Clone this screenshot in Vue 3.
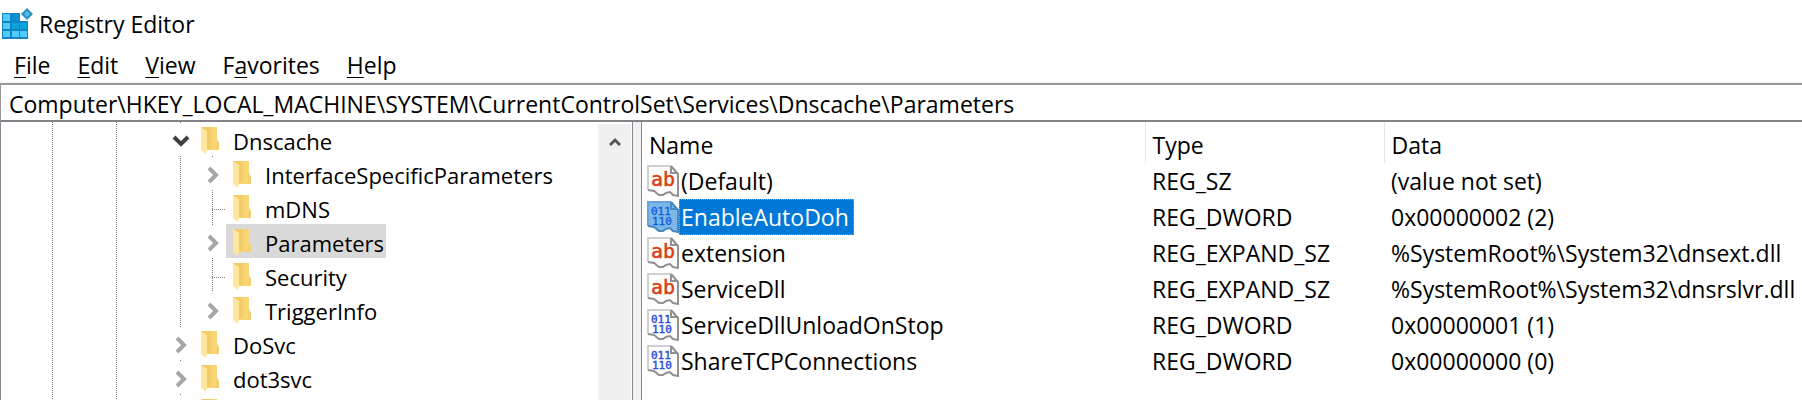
<script setup>
import { ref } from 'vue'

const menus = [
  { before: '', key: 'F', after: 'ile' },
  { before: '', key: 'E', after: 'dit' },
  { before: '', key: 'V', after: 'iew' },
  { before: 'F', key: 'a', after: 'vorites' },
  { before: '', key: 'H', after: 'elp' }
]

const address = ref('Computer\\HKEY_LOCAL_MACHINE\\SYSTEM\\CurrentControlSet\\Services\\Dnscache\\Parameters')

// toggle: 'open' | 'closed' | 'none'
const tree = [
  { name: 'Dnscache', child: false, toggle: 'open' },
  { name: 'InterfaceSpecificParameters', child: true, toggle: 'closed' },
  { name: 'mDNS', child: true, toggle: 'none' },
  { name: 'Parameters', child: true, toggle: 'closed' },
  { name: 'Security', child: true, toggle: 'none' },
  { name: 'TriggerInfo', child: true, toggle: 'closed' },
  { name: 'DoSvc', child: false, toggle: 'closed' },
  { name: 'dot3svc', child: false, toggle: 'closed' },
  { name: '', child: false, toggle: 'closed' }
]
const selectedKey = ref('Parameters')

const values = [
  { name: '(Default)', type: 'REG_SZ', data: '(value not set)' },
  { name: 'EnableAutoDoh', type: 'REG_DWORD', data: '0x00000002 (2)' },
  { name: 'extension', type: 'REG_EXPAND_SZ', data: '%SystemRoot%\\System32\\dnsext.dll' },
  { name: 'ServiceDll', type: 'REG_EXPAND_SZ', data: '%SystemRoot%\\System32\\dnsrslvr.dll' },
  { name: 'ServiceDllUnloadOnStop', type: 'REG_DWORD', data: '0x00000001 (1)' },
  { name: 'ShareTCPConnections', type: 'REG_DWORD', data: '0x00000000 (0)' }
]
const selectedValue = ref('EnableAutoDoh')
</script>

<template>
  <div class="window">
    <header class="titlebar">
      <svg class="logo" viewBox="0 0 32 32" aria-hidden="true">
        <path d="M0 5h18v8h8v18H0z" fill="#1583c2" />
        <path d="M1 6h7v7H1zM1 15h7v6H1zM1 23h7v6H1zM10 23h7v6h-7zM18 23h7v6h-7z" fill="#4fcbfd" />
        <path d="M10 6h7v7h-7z" fill="#0c8fcf" />
        <path d="M10 15h7v6h-7zM18 15h7v6h-7z" fill="#08a4e0" />
        <path d="M25 0l6 6-6 6-6-6z" fill="#2e8fbd" />
        <path d="M25 3l3 3-3 3-3-3z" fill="#4cc3ee" />
      </svg>
      <h1>Registry Editor</h1>
    </header>

    <nav class="menubar">
      <button v-for="m in menus" :key="m.key" type="button">{{ m.before }}<u>{{ m.key }}</u>{{ m.after }}</button>
    </nav>

    <div class="address">
      <input v-model="address" type="text" aria-label="Address" spellcheck="false" />
    </div>

    <main class="panes">
      <section class="tree-pane">
        <ul class="tree">
          <li v-for="node in tree" :key="node.name">
            <span class="rail line"></span>
            <span class="rail"></span>
            <span class="rail line"></span>
            <span class="rail"></span>
            <span v-if="node.child" class="rail line"></span>
            <span v-if="node.toggle === 'none'" class="rail line branch"></span>
            <button v-else type="button" class="rail toggle" :class="{ tick: node.name !== 'TriggerInfo' }" :aria-label="'Toggle ' + node.name">
              <svg v-if="node.toggle === 'open'" viewBox="0 0 18 12" width="18" height="12">
                <path d="M2 2l7 7 7-7" fill="none" stroke="#404040" stroke-width="4" />
              </svg>
              <svg v-else viewBox="0 0 12 18" width="12" height="18">
                <path d="M2 2l7 7-7 7" fill="none" stroke="#a6a6a6" stroke-width="4" />
              </svg>
            </button>
            <button type="button" class="key" :class="{ selected: node.name === selectedKey }" @click="selectedKey = node.name">
              <svg viewBox="0 0 18 27" width="18" height="27" aria-hidden="true">
                <path d="M1 0h15v12l2 4v7H5V1z" fill="#f7d673" />
                <path d="M0 0h10v22H5z" fill="#f0cb67" />
                <path d="M0 0l6 4v18l-1 5-5-4z" fill="#ffe69b" />
                <path d="M16 13l2 4v6h-3z" fill="#f1cf6d" />
              </svg>
              <span>{{ node.name }}</span>
            </button>
          </li>
        </ul>
        <div class="scrollbar">
          <button type="button" aria-label="Scroll up">
            <svg viewBox="0 0 12 10" width="12" height="10">
              <path d="M1 8l5-5 5 5" fill="none" stroke="#555" stroke-width="3" />
            </svg>
          </button>
        </div>
      </section>

      <section class="list-pane">
        <table>
          <colgroup>
            <col class="col-name" />
            <col class="col-type" />
            <col />
          </colgroup>
          <thead>
            <tr>
              <th scope="col">Name</th>
              <th scope="col">Type</th>
              <th scope="col">Data</th>
            </tr>
          </thead>
          <tbody>
            <tr v-for="v in values" :key="v.name" :class="{ selected: v.name === selectedValue }" @click="selectedValue = v.name">
              <td>
                <div class="value">
                  <svg viewBox="0 0 32 32" width="32" height="32" aria-hidden="true">
                    <path class="page" d="M1 1h23l7 8v22l-5-1-3-3-4 1-3 2h-4l-5-4-6-1z" />
                    <path class="edge" d="M1 25V1h23" />
                    <path class="torn" d="M24 1l7 8v22l-5-1-3-3-4 1-3 2h-4l-5-4-6-1M24 1v7h7" />
                    <template v-if="v.type === 'REG_DWORD'">
                      <text class="bits" x="4" y="14">011</text>
                      <text class="bits" x="5" y="24">110</text>
                    </template>
                    <text v-else class="ab" x="4" y="21">ab</text>
                  </svg>
                  <span class="label">{{ v.name }}</span>
                </div>
              </td>
              <td>{{ v.type }}</td>
              <td>{{ v.data }}</td>
            </tr>
          </tbody>
        </table>
      </section>
    </main>
  </div>
</template>

<style>
body {
  margin: 0;
  background: #fff;
}
</style>

<style scoped>
.window {
  display: flex;
  flex-direction: column;
  height: 100vh;
  overflow: hidden;
  background: #fff;
  color: #000;
  font: 23px/32px "Open Sans", "Noto Sans", sans-serif;
}

button,
input {
  margin: 0;
  padding: 0;
  border: 0;
  background: none;
  color: inherit;
  font: inherit;
}

svg {
  display: block;
  flex: none;
}

.titlebar {
  display: flex;
  align-items: center;
  gap: 5px;
  height: 48px;
  padding-left: 2px;
}

.logo {
  width: 32px;
  height: 32px;
}

h1 {
  margin: 0;
  font-size: 23px;
  font-weight: 400;
}

.menubar {
  display: flex;
  gap: 27px;
  height: 34px;
  padding-left: 14px;
  border-bottom: 1px solid #f0f0f0;
}

.menubar u {
  text-decoration-thickness: 1px;
  text-underline-offset: 3px;
}

.address {
  display: flex;
  height: 35px;
  border: solid #999;
  border-width: 2px 0 2px 1px;
  border-bottom-color: #828287;
}

.address input {
  flex: 1;
  min-width: 0;
  padding: 2px 0 0 8px;
  outline: 0;
}

.panes {
  display: flex;
  flex: 1;
  min-height: 0;
  background: #f0f0f0;
}

.tree-pane {
  display: flex;
  flex: none;
  box-sizing: border-box;
  width: 633px;
  overflow: hidden;
  border: solid #828790;
  border-width: 0 1px;
  background: #fff;
}

.tree {
  flex: 1;
  margin: 0;
  padding: 0 0 0 36px;
  list-style: none;
  font-size: 22px;
}

.tree li {
  display: flex;
  height: 34px;
}

.rail {
  flex: none;
  width: 32px;
}

.line {
  background: repeating-linear-gradient(#808080 0 1px, transparent 1px 2px) 15px 0 / 1px 100% no-repeat;
}

.branch {
  background:
    repeating-linear-gradient(#808080 0 1px, transparent 1px 2px) 15px 0 / 1px 100% no-repeat,
    repeating-linear-gradient(90deg, #808080 0 1px, transparent 1px 2px) 15px 19px / 14px 1px no-repeat;
}

.toggle {
  display: flex;
  align-items: center;
  justify-content: center;
  padding-top: 4px;
}

.tick {
  background: linear-gradient(#808080, #808080) 15px 0 / 1px 1px no-repeat;
}

.key {
  display: flex;
  align-items: flex-start;
  gap: 14px;
  margin-left: -3px;
  padding: 3px 2px 0 7px;
  white-space: nowrap;
}

.key svg {
  margin-top: 2px;
}

.key.selected {
  background: #d9d9d9;
}

.scrollbar {
  width: 33px;
  margin: 2px 1px 0 0;
  background: #f0f0f0;
}

.scrollbar button {
  display: flex;
  align-items: center;
  justify-content: center;
  width: 100%;
  height: 36px;
}

.list-pane {
  flex: 1;
  min-width: 0;
  margin-left: 8px;
  overflow: hidden;
  border-left: 1px solid #828790;
  background: #fff;
}

table {
  width: 100%;
  table-layout: fixed;
  border-collapse: collapse;
  white-space: nowrap;
}

.col-name {
  width: 503px;
}

.col-type {
  width: 239px;
}

th {
  height: 41px;
  padding: 4px 0 0 7px;
  box-sizing: border-box;
  border-right: 1px solid #e5e5e5;
  font-weight: 400;
  text-align: left;
}

th:last-child {
  border-right: 0;
}

td {
  height: 36px;
  padding: 0 0 0 7px;
}

td:first-child {
  padding-left: 5px;
}

.value {
  display: flex;
  align-items: center;
}

.label {
  padding: 1px 4px 1px 1px;
  border: 1px solid transparent;
}

.selected .label {
  border: 1px dotted #ff8728;
  background: #0078d7;
  color: #fff;
}

.page {
  fill: #fcfcfc;
}

.edge {
  fill: none;
  stroke: #cfcfcf;
  stroke-width: 2;
}

.torn {
  fill: none;
  stroke: #919191;
  stroke-width: 2;
}

.ab {
  fill: #d8400f;
  stroke: #d8400f;
  stroke-width: 0.5;
  font: 20px "DejaVu Sans Mono", monospace;
}

.bits {
  fill: #2a4be0;
  stroke: #2a4be0;
  stroke-width: 0.4;
  font: 11px "DejaVu Sans Mono", monospace;
}

.selected .page {
  fill: #7eb8e9;
}

.selected .edge {
  stroke: #67a5d6;
}

.selected .torn {
  stroke: #4889bf;
}

.selected .bits {
  fill: #155fdc;
  stroke: #155fdc;
}
</style>
